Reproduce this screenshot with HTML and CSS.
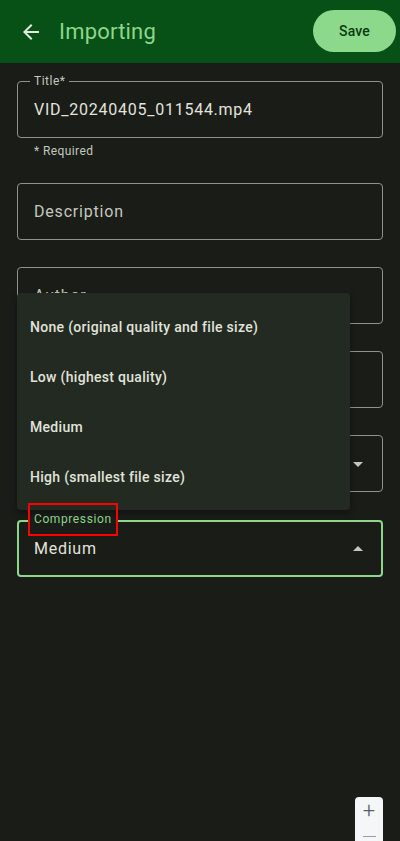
FILE: index.html
```html
<!DOCTYPE html>
<html>
<head>
<meta charset="utf-8">
<link rel="stylesheet" href="styles.css">
</head>
<body>
<div class="app">
  <header class="appbar">
    <button class="back" aria-label="Back">
      <svg width="24" height="24" viewBox="0 0 24 24"><path d="M20 11H7.83l5.59-5.59L12 4l-8 8 8 8 1.41-1.41L7.83 13H20v-2z" fill="#e3e8df"/></svg>
    </button>
    <h1 class="title">Importing</h1>
    <button class="save">Save</button>
  </header>

  <main class="form">
    <div class="field filled">
      <span class="label">Title*</span>
      <span class="value">VID_20240405_011544.mp4</span>
    </div>
    <div class="helper">* Required</div>

    <div class="field gap-desc">
      <span class="placeholder">Description</span>
    </div>

    <div class="field gap">
      <span class="placeholder">Author</span>
    </div>

    <div class="field gap"></div>

    <div class="field gap select">
      <span class="arrow down"></span>
    </div>

    <div class="field gap select focused">
      <span class="label green">Compression</span>
      <span class="value">Medium</span>
      <span class="arrow up"></span>
    </div>

    <ul class="menu">
      <li>None (original quality and file size)</li>
      <li>Low (highest quality)</li>
      <li>Medium</li>
      <li>High (smallest file size)</li>
    </ul>

    <div class="highlight"></div>
  </main>

  <div class="zoomctl">
    <span class="plus">+</span>
    <span class="minus"></span>
  </div>
</div>
</body>
</html>
```

FILE: styles.css
```css
* { box-sizing: border-box; }
html, body {
  margin: 0;
  padding: 0;
  background: #1a1c18;
  font-family: Roboto, "Noto Sans", sans-serif;
  color: #e2e3dd;
}
.app {
  position: relative;
  width: 400px;
  height: 841px;
  overflow: hidden;
  background: #1a1c18;
}
.appbar {
  height: 63px;
  background: #075117;
  display: flex;
  align-items: center;
  padding: 0 4px 0 8px;
}
.back {
  width: 44px;
  height: 44px;
  border: none;
  background: transparent;
  padding: 0;
  display: flex;
  align-items: center;
  justify-content: center;
  margin-left: 1px;
}
.title {
  margin: 0 0 0 6px;
  font-size: 22px;
  font-weight: 400;
  color: #8dd68a;
  flex: 1;
  letter-spacing: 0.2px;
}
.save {
  width: 83px;
  height: 42px;
  border: none;
  border-radius: 21px;
  background: #8dd98b;
  color: #0b3a10;
  font-family: Roboto, sans-serif;
  font-size: 14px;
  font-weight: 500;
  letter-spacing: 0.2px;
  margin-top: -2px;
}
.form {
  position: relative;
  padding: 18px 17px 0 17px;
}
.field {
  position: relative;
  height: 57px;
  border: 1px solid #8e9389;
  border-radius: 4px;
  display: flex;
  align-items: center;
  padding: 0 16px;
}
.field .label {
  position: absolute;
  top: -9px;
  left: 12px;
  padding: 0 4px;
  font-size: 12px;
  line-height: 16px;
  color: #c3c8bd;
  background: #1a1c18;
  letter-spacing: 0.5px;
}
.field .label.green { color: #8dd68a; letter-spacing: 0.6px; }
.value {
  font-size: 16px;
  color: #e2e3dd;
  letter-spacing: 0.75px;
}
.placeholder {
  font-size: 16px;
  color: #c3c8bd;
  letter-spacing: 0.8px;
}
.helper {
  font-size: 12px;
  line-height: 16px;
  color: #c3c8bd;
  padding: 5px 0 0 17px;
  letter-spacing: 0.4px;
}
.gap-desc { margin-top: 24px; }
.gap { margin-top: 27px; }
.focused {
  border: 2px solid #8dd68a;
  padding: 0 15px;
  height: 57px;
  margin-top: 28px;
}
.focused .label { top: -11px; left: 11px; }
.arrow {
  position: absolute;
  right: 19px;
  width: 0;
  height: 0;
  border-left: 5px solid transparent;
  border-right: 5px solid transparent;
}
.arrow.down { border-top: 5px solid #c3c8bd; top: 26px; right: 19px; }
.arrow.up { border-bottom: 5px solid #c3c8bd; top: 24px; right: 18px; }
.menu {
  position: absolute;
  left: 17px;
  top: 230px;
  width: 333px;
  height: 217px;
  margin: 0;
  padding: 9px 0 7px;
  list-style: none;
  background: #232a22;
  border-radius: 4px;
  box-shadow: 0 3px 6px rgba(0,0,0,0.35);
}
.menu li {
  height: 50px;
  display: flex;
  align-items: center;
  padding: 0 13px;
  font-size: 14px;
  font-weight: 500;
  color: #e0e3da;
  letter-spacing: 0.3px;
}
.highlight {
  position: absolute;
  left: 28px;
  top: 440px;
  width: 90px;
  height: 33px;
  border: 2px solid #ff0000;
}
.zoomctl {
  position: absolute;
  left: 355px;
  top: 797px;
  width: 28px;
  height: 60px;
  background: #f5f6f8;
  border-radius: 4px;
  display: flex;
  flex-direction: column;
  align-items: center;
}
.zoomctl .plus {
  font-size: 22px;
  line-height: 22px;
  color: #5a5d66;
  margin-top: 3px;
  font-weight: 300;
}
.zoomctl .minus {
  width: 13px;
  height: 1px;
  background: #9a9ca3;
  margin-top: 14px;
}
```
